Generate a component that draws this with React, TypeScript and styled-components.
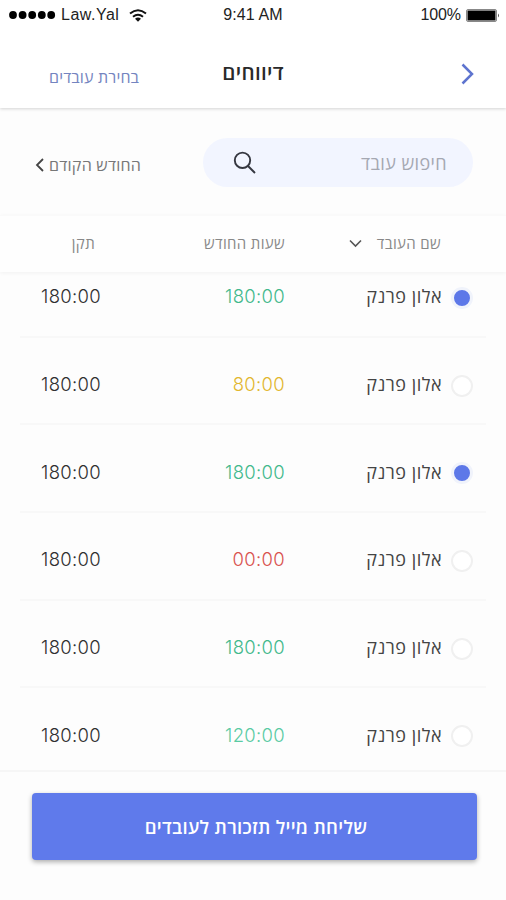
import React from "react";
import styled, { createGlobalStyle } from "styled-components";

const GlobalStyle = createGlobalStyle`
  * { box-sizing: border-box; }
  body { margin: 0; background: #fdfdfd; }
  button, input { font: inherit; letter-spacing: inherit; border: 0; padding: 0; background: none; }
`;

const Screen = styled.main`
  width: 506px;
  height: 900px;
  overflow: hidden;
  display: flex;
  flex-direction: column;
  background: #fdfdfd;
  color: #303030;
  font-family: "Open Sans", "Liberation Sans", sans-serif;
  direction: rtl;
`;

const Top = styled.header`
  flex: 0 0 108px;
  background: #fff;
  box-shadow: 0 1px 3px rgba(0, 0, 0, 0.17);
`;

const StatusBar = styled.div`
  direction: ltr;
  height: 30px;
  padding: 0 6px 0 9px;
  display: grid;
  grid-template-columns: 1fr auto 1fr;
  align-items: center;
  font: 16px/30px "Liberation Sans", sans-serif;
  color: #222;
`;

const StatusGroup = styled.div<{ $end?: boolean }>`
  display: flex;
  align-items: center;
  justify-content: ${(p) => (p.$end ? "flex-end" : "flex-start")};
  gap: 5px;
`;

const Carrier = styled.span`
  font-size: 16px;
  letter-spacing: 0.5px;
  margin-right: 5px;
`;

const Time = styled.span`
  margin-right: 3px;
  letter-spacing: 0.1px;
`;

const Charge = styled.span`
  letter-spacing: -0.1px;
`;

const NavBar = styled.nav`
  height: 78px;
  padding: 0 30px;
  display: grid;
  grid-template-columns: 1fr auto 1fr;
  align-items: center;
`;

const IconButton = styled.button`
  display: flex;
  width: 18px;
  margin-top: 10px;
`;

const Title = styled.h1`
  margin: 6px 0 0;
  font-size: 20.5px;
  font-weight: 600;
  line-height: 28px;
  color: #2a2a2a;
  letter-spacing: 0.3px;
`;

const TextLink = styled.button`
  justify-self: end;
  margin: 15px 0 0 19px;
  font-size: 16px;
  line-height: 24px;
  letter-spacing: 0.15px;
  color: #7484c0;
`;

const Filters = styled.section`
  flex: 0 0 107px;
  padding: 2px 33px 0 35px;
  display: flex;
  align-items: center;
  justify-content: space-between;
`;

const SearchBox = styled.label`
  width: 270px;
  height: 49px;
  padding: 0 26px 0 30px;
  border-radius: 25px;
  background: #f2f5ff;
  display: flex;
  align-items: center;
  justify-content: space-between;
`;

const Placeholder = styled.span`
  font-size: 18px;
  line-height: 24px;
  letter-spacing: 0.4px;
  color: #a5a8b2;
`;

const MonthButton = styled.button`
  display: flex;
  align-items: center;
  gap: 4px;
  margin-top: 5px;
  font-size: 16px;
  line-height: 24px;
  letter-spacing: 0.25px;
  color: #777;
`;

const columns = "26px 135px 1fr 185px";

const TableHead = styled.div`
  flex: 0 0 57px;
  padding: 0 39px 2px 40px;
  border-top: 1px solid #fafafa;
  display: grid;
  grid-template-columns: ${columns};
  align-items: center;
  background: #fefefe;
  box-shadow: 0 1px 4px rgba(0, 0, 0, 0.05);
  font-size: 15px;
  letter-spacing: 0.35px;
  color: #888;
`;

const HeadCell = styled.span<{ $inset?: number }>`
  display: flex;
  align-items: center;
  gap: 15px;
  white-space: nowrap;
  padding-inline-start: ${(p) => p.$inset ?? 0}px;
`;

const List = styled.ul`
  flex: 0 0 500px;
  margin: 0;
  padding: 0 20px;
  list-style: none;
  overflow: hidden;
  border-bottom: 2px solid #f6f6f6;
`;

const Row = styled.li`
  height: 87.7px;
  padding: 7px 19px 0 20px;
  display: grid;
  grid-template-columns: ${columns};
  align-items: center;
  border-bottom: 2px solid #f8f8f8;

  &:first-child { margin-top: -22px; }
  &:last-child { border-bottom-color: transparent; }
`;

const Radio = styled.span<{ $on: boolean }>`
  width: 22px;
  height: 22px;
  margin: 3px -6px 0 0;
  border-radius: 50%;
  border: ${(p) => (p.$on ? "3px solid #f0f3fb" : "2px solid #f0f0f0")};
  background: ${(p) => (p.$on ? "#5d78e8" : "#fff")};
`;

const Name = styled.span`
  font-size: 18px;
  line-height: 24px;
  letter-spacing: 0.5px;
  margin: 0 -1px 0 0;
  color: #444;
  white-space: nowrap;
`;

const Hours = styled.span<{ $inset: number; $color?: string }>`
  display: flex;
  flex-direction: row-reverse;
  direction: ltr;
  padding-right: ${(p) => p.$inset}px;
  font-family: Inter, sans-serif;
  font-size: 18.5px;
  font-weight: 300;
  line-height: 24px;
  letter-spacing: 0.3px;
  color: ${(p) => p.$color ?? "#303030"};
`;

const Footer = styled.footer`
  flex: 1;
  padding: 21px 29px 0 32px;
`;

const SendButton = styled.button`
  width: 100%;
  height: 67px;
  padding-left: 3px;
  border-radius: 4px;
  background: #5f7aeb;
  box-shadow: 0 2px 5px rgba(0, 0, 0, 0.32);
  color: #fff;
  font-size: 18.5px;
  font-weight: 600;
  letter-spacing: 0.3px;
`;

const SignalDots = () => (
  <svg width="47" height="10" viewBox="0 0 47 10">
    {[4, 13.6, 23.2, 32.8, 42.2].map((x) => (
      <circle key={x} cx={x} cy="5" r="3.9" fill="#000" />
    ))}
  </svg>
);

const Wifi = () => (
  <svg width="18" height="13" viewBox="0 0 18 13" fill="none" stroke="#111" strokeWidth="2">
    <path d="M1 4.5Q9-2 17 4.5M4 7.7Q9 3.7 14 7.7" />
    <path d="M6 9.8Q9 7.4 12 9.8L9 12.7Z" fill="#111" stroke="none" />
  </svg>
);

const Battery = () => (
  <svg width="34" height="13" viewBox="0 0 34 13">
    <rect x=".5" y=".5" width="30" height="12" rx="1.5" fill="#fff" stroke="#888" />
    <rect x="1.5" y="1.5" width="28" height="10" fill="#000" />
    <path d="M32 4.5q2 2 0 4z" fill="#555" />
  </svg>
);

const ChevronRight = () => (
  <svg width="16" height="24" viewBox="0 0 16 24" fill="none" stroke="#5e74cf" strokeWidth="2.5">
    <path d="M2.5 2.5l9.5 9.5-9.5 9.5" />
  </svg>
);

const ChevronLeft = () => (
  <svg width="10" height="14" viewBox="0 0 10 14" fill="none" stroke="#444" strokeWidth="1.8">
    <path d="M8 1L2 7l6 6" />
  </svg>
);

const ChevronDown = () => (
  <svg width="13" height="9" viewBox="0 0 13 9" fill="none" stroke="#555" strokeWidth="1.6">
    <path d="M1 1.5l5.5 5.5L12 1.5" />
  </svg>
);

const SearchIcon = () => (
  <svg width="23" height="23" viewBox="0 0 23 23" fill="none" stroke="#353740" strokeWidth="1.9">
    <circle cx="9.5" cy="9.3" r="7.7" />
    <path d="M15 15l7 7" />
  </svg>
);

const GREEN = "#43b98c";
const reports = [
  { hours: "180:00", color: GREEN, on: true },
  { hours: "80:00", color: "#e2b72f", on: false },
  { hours: "180:00", color: GREEN, on: true },
  { hours: "00:00", color: "#d9534f", on: false },
  { hours: "180:00", color: GREEN, on: false },
  { hours: "120:00", color: "#5acba4", on: false },
];

export default function App() {
  return (
    <Screen lang="he">
      <GlobalStyle />
      <Top>
        <StatusBar>
          <StatusGroup>
            <SignalDots />
            <Carrier>Law.Yal</Carrier>
            <Wifi />
          </StatusGroup>
          <Time>9:41 AM</Time>
          <StatusGroup $end>
            <Charge>100%</Charge>
            <Battery />
          </StatusGroup>
        </StatusBar>
        <NavBar>
          <IconButton aria-label="חזרה"><ChevronRight /></IconButton>
          <Title>דיווחים</Title>
          <TextLink>בחירת עובדים</TextLink>
        </NavBar>
      </Top>
      <Filters>
        <SearchBox>
          <Placeholder>חיפוש עובד</Placeholder>
          <SearchIcon />
        </SearchBox>
        <MonthButton>החודש הקודם<ChevronLeft /></MonthButton>
      </Filters>
      <TableHead>
        <span />
        <HeadCell>שם העובד<ChevronDown /></HeadCell>
        <HeadCell $inset={21}>שעות החודש</HeadCell>
        <HeadCell $inset={130 - 21}>תקן</HeadCell>
      </TableHead>
      <List>
        {reports.map((r, i) => (
          <Row key={i}>
            <Radio $on={r.on} />
            <Name>אלון פרנק</Name>
            <Hours $inset={21} $color={r.color}>{r.hours}</Hours>
            <Hours $inset={124}>180:00</Hours>
          </Row>
        ))}
      </List>
      <Footer>
        <SendButton>שליחת מייל תזכורת לעובדים</SendButton>
      </Footer>
    </Screen>
  );
}
